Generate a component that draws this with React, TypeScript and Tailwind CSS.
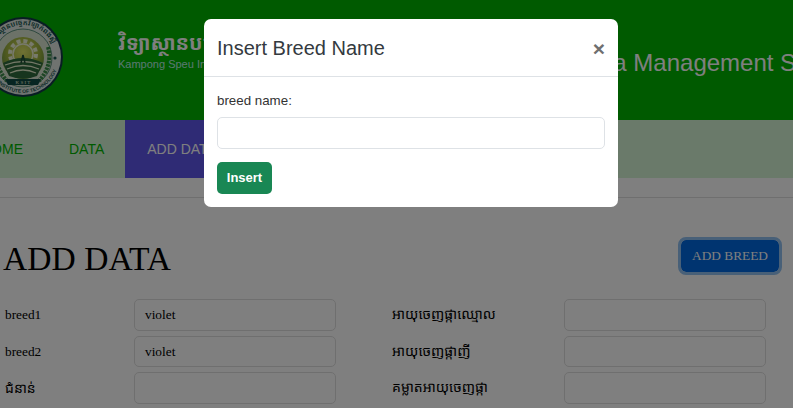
const rows = [
  { left: "breed1", value: "violet", right: "អាយុចេញផ្កាឈ្មោល", h: "h-[32px]" },
  { left: "breed2", value: "violet", right: "អាយុចេញផ្កាញី", h: "h-[31px]" },
  { left: "ជំនាន់", value: "", right: "គម្លាតអាយុចេញផ្កា", h: "h-[32px]" },
];

const khmer = "font-['Noto_Sans_Khmer','Khmer_OS','DejaVu_Sans','Liberation_Serif',serif]";

function Logo() {
  return (
    <svg width="80" height="80" viewBox="0 0 80 80" className="shrink-0">
      <defs>
        <radialGradient id="seal" cx="50%" cy="35%" r="65%">
          <stop offset="0%" stopColor="#e0e468" />
          <stop offset="60%" stopColor="#a0b440" />
          <stop offset="100%" stopColor="#5c8a3c" />
        </radialGradient>
        <path id="ringTop" d="M8 40 A32 32 0 0 1 72 40" />
        <path id="ringBottom" d="M4 40 A36 36 0 0 0 76 40" />
      </defs>
      <circle cx="40" cy="40" r="40" fill="#123a48" />
      <circle cx="40" cy="40" r="38" fill="#dfe6e0" />
      <text className="font-['Noto_Sans_Khmer','DejaVu_Sans',sans-serif]" fontSize="7" fontWeight="700" fill="#1c5a52">
        <textPath href="#ringTop" startOffset="50%" textAnchor="middle">វិទ្យាស្ថានបច្ចេកវិទ្យាកំពង់ស្ពឺ</textPath>
      </text>
      <text fontSize="5" fontWeight="700" fill="#1c5a52" className="font-['Liberation_Sans',sans-serif]">
        <textPath href="#ringBottom" startOffset="50%" textAnchor="middle">SPEU INSTITUTE OF TECHNOLOGY</textPath>
      </text>
      <circle cx="40" cy="41" r="29" fill="#d8e4d0" stroke="#3c7a66" strokeWidth="0.8" />
      <circle cx="40" cy="41" r="21" fill="url(#seal)" />
      <circle cx="40" cy="37" r="13" fill="none" stroke="#f0f4d8" strokeWidth="4" strokeDasharray="4 2.8" />
      <circle cx="40" cy="37" r="10" fill="none" stroke="#f0f4d8" strokeWidth="1.5" />
      <path d="M20 46 Q40 36 60 46 L54 59 Q40 64 26 59 Z" fill="#2f6a3c" />
      <path d="M22 48 Q40 41 58 48 M24 52 Q40 45 56 52 M27 56 Q40 50 53 56" stroke="#e8efcf" strokeWidth="1.3" fill="none" />
      <path d="M40 38 L38 46 M40 38 L42 46" stroke="#1c4a34" strokeWidth="1.5" />
      <path d="M15 30 Q10 48 24 64" stroke="#3a8a48" strokeWidth="4" fill="none" strokeDasharray="2.5 1" />
      <path d="M65 30 Q70 48 56 64" stroke="#3a8a48" strokeWidth="4" fill="none" strokeDasharray="2.5 1" />
      <path d="M22 62 H58 L55 68 H25 Z" fill="#0f4a44" />
      <text x="40" y="67" fontSize="5" textAnchor="middle" fill="#e8f0d8" className="font-['Liberation_Serif',serif]">K S I T</text>
      <circle cx="72" cy="41" r="1.6" fill="#1c5a52" />
    </svg>
  );
}

export default function App() {
  return (
    <div className="relative h-[408px] w-[793px] overflow-hidden bg-white font-['Liberation_Serif',serif]">
      {/* HEADER */}
      <div className="flex h-[120px] items-start bg-[#00b400]">
        <div className="mt-[17px] -ml-[17px] flex items-start">
          <Logo />
          <div className="mt-[11px] ml-[55px] w-[400px] shrink-0">
            <div className={`text-[20px] leading-[29px] font-bold text-white ${khmer}`}>វិទ្យាស្ថានបច្ចេកវិទ្យា</div>
            <div className="font-['Liberation_Sans',sans-serif] text-[11px] leading-[14px] text-[#b8f0e0]">
              Kampong Speu Institute of Technology
            </div>
          </div>
          <div className="mt-[28px] ml-[58px] font-['Liberation_Sans',sans-serif] text-[24px] whitespace-nowrap text-white">
            Data Management System
          </div>
        </div>
      </div>

      {/* NAV */}
      <div className="-ml-[41px] flex h-[58px] items-center bg-[#d4f4d4] font-['Liberation_Sans',sans-serif] text-[14px]">
        <a className="flex h-full items-center pr-[23px] pl-[22px] text-[#00b400]">HOME</a>
        <a className="flex h-full items-center pr-[21px] pl-[23px] text-[#00b400]">DATA</a>
        <a className="flex h-full items-center bg-[#5e56ea] px-[22px] text-white">ADD DATA</a>
      </div>

      {/* CONTENT */}
      <div className="mt-[19px] border-t border-[#dedede] pt-[42px] pl-[4px]">
        <div className="flex items-start justify-between pr-[14px]">
          <h1 className="-ml-[1px] text-[33.6px] leading-[38px] text-black">ADD DATA</h1>
          <button className="h-[32px] w-[98px] rounded-[5px] bg-[#0068e0] text-[13.33px] text-white outline-[3px] outline-[#90c0f0]">
            ADD BREED
          </button>
        </div>

        <div className="mt-[21px] flex flex-col gap-[5px] text-[13.33px] text-black">
          {rows.map((row) => (
            <div key={row.left} className="flex items-center">
              <div className={`w-[130px] pl-[1px] ${row.left === "ជំនាន់" ? `${khmer} pb-[2px] text-[14px]` : ""}`}>{row.left}</div>
              <div className={`flex w-[202px] items-center rounded-[5px] border border-[#dedede] px-[10px] ${row.h}`}>{row.value}</div>
              <div className={`ml-[56px] w-[172px] pb-[3px] text-[14px] ${khmer}`}>{row.right}</div>
              <div className={`w-[202px] rounded-[5px] border border-[#dedede] ${row.h}`} />
            </div>
          ))}
        </div>
      </div>

      {/* BACKDROP + MODAL */}
      <div className="absolute inset-0 bg-black/50" />
      <div className="absolute top-[19px] left-[204px] w-[414px] rounded-[7px] bg-white font-['Liberation_Sans',sans-serif] text-[#212529]">
        <div className="flex h-[58px] items-center justify-between border-b border-[#dee2e6] px-[13px]">
          <h5 className="text-[20px] text-[#343a40]">Insert Breed Name</h5>
          <span className="pt-[2px] text-[21px] leading-none font-bold text-[#6f6f6f]">×</span>
        </div>
        <div className="px-[13px] pt-[15px] pb-[13px]">
          <label className="block text-[13.33px] leading-[17px] text-[#333]">breed name:</label>
          <input className="mt-[8px] block h-[32px] w-full rounded-[5px] border border-[#dee2e6] bg-white" />
          <button className="mt-[13px] block h-[32px] w-[55px] rounded-[5px] bg-[#198754] text-[13px] font-bold text-white">
            Insert
          </button>
        </div>
      </div>
    </div>
  );
}
